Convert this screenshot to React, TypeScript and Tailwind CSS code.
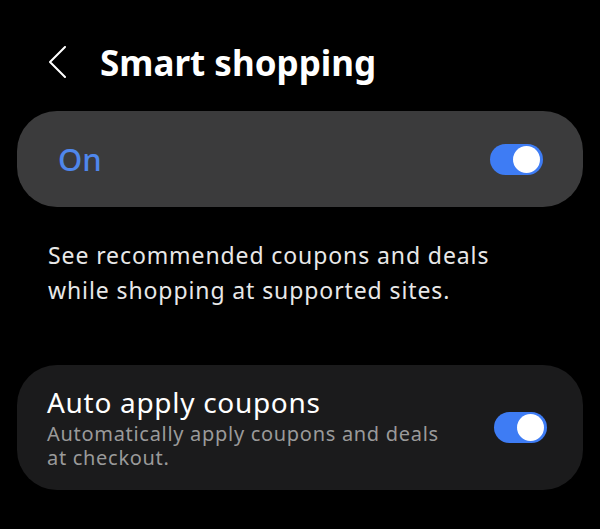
import React from "react";

function Toggle() {
  return (
    <div className="relative h-[31px] w-[53px] shrink-0 rounded-full bg-[#3e7cf4]">
      <div className="absolute right-[3px] top-[2px] h-[27px] w-[27px] rounded-full bg-white" />
    </div>
  );
}

export default function App() {
  return (
    <div
      className="min-h-screen w-full bg-black px-[17px] text-white"
      style={{ fontFamily: '"Noto Sans", "Open Sans", sans-serif' }}
    >
      {/* header */}
      <div className="flex h-[92px] items-center pt-[32px]">
        <svg className="ml-[32px] h-[32px] w-[18px]" viewBox="0 0 18 32" fill="none">
          <polyline
            points="16,1 1,16 16,31"
            stroke="white"
            strokeWidth="2"
            strokeLinecap="round"
            strokeLinejoin="round"
          />
        </svg>
        <h1 className="ml-[33px] text-[35px] font-bold leading-none">Smart shopping</h1>
      </div>

      {/* master switch */}
      <div className="mt-[19px] flex h-[96px] items-center justify-between rounded-[40px] bg-[#3b3b3c] pl-[41px] pr-[40px]">
        <span className="text-[31px] font-medium text-[#4f87ec]">On</span>
        <Toggle />
      </div>

      <p className="mt-[31px] max-w-[540px] px-[31px] text-[23px] leading-[35px] tracking-[0.9px] text-[#e8e8e8]">
        See recommended coupons and deals while shopping at supported sites.
      </p>

      {/* auto apply row */}
      <div className="mt-[57px] flex h-[125px] items-center justify-between rounded-[40px] bg-[#1b1b1c] pl-[30px] pr-[36px]">
        <div className="max-w-[400px]">
          <div className="text-[28px] leading-[32px] tracking-[0.7px]">Auto apply coupons</div>
          <div className="mt-[4px] text-[20px] leading-[24px] tracking-[0.7px] text-[#9a9a9a]">
            Automatically apply coupons and deals at checkout.
          </div>
        </div>
        <Toggle />
      </div>
    </div>
  );
}
